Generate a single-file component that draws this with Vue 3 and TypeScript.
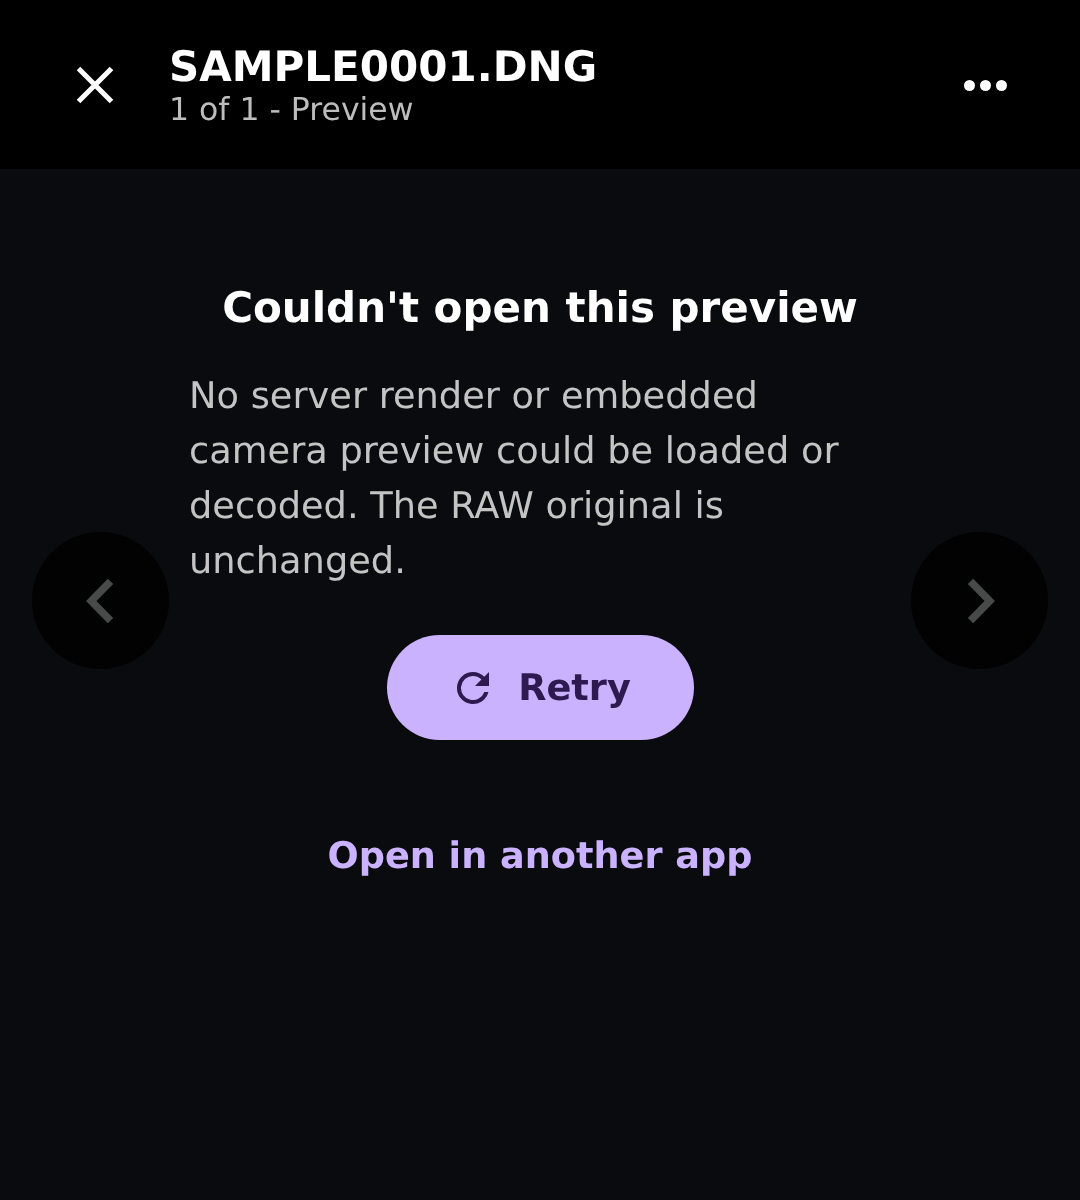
<template>
  <div class="screen">
    <header class="top-bar">
      <button class="close-btn" aria-label="Close">
        <svg width="40" height="40" viewBox="0 0 40 40">
          <path d="M3.5 3.5 L36.5 36.5 M36.5 3.5 L3.5 36.5" stroke="#fff" stroke-width="5" fill="none" />
        </svg>
      </button>
      <div class="titles">
        <div class="file-name">SAMPLE0001.DNG</div>
        <div class="file-sub">1 of 1 - Preview</div>
      </div>
      <button class="more-btn" aria-label="More">
        <span v-for="n in 3" :key="n" class="dot"></span>
      </button>
    </header>

    <main class="body">
      <button class="nav-btn prev" aria-label="Previous">
        <svg width="30" height="46" viewBox="0 0 30 46">
          <path d="M24.5 3.3 L5.3 23 L24.5 42.7" stroke="#484a4a" stroke-width="7.5" fill="none" />
        </svg>
      </button>
      <button class="nav-btn next" aria-label="Next">
        <svg width="30" height="46" viewBox="0 0 30 46">
          <path d="M5.5 3.3 L24.7 23 L5.5 42.7" stroke="#484a4a" stroke-width="7.5" fill="none" />
        </svg>
      </button>

      <section class="error">
        <h1 class="error-title">Couldn't open this preview</h1>
        <p class="error-text">No server render or embedded camera preview could be loaded or decoded. The RAW original is unchanged.</p>
        <button class="retry">
          <svg width="48" height="48" viewBox="0 0 24 24">
            <path d="M17.65 6.35A7.96 7.96 0 0 0 12 4a8 8 0 1 0 7.73 10h-2.08A6 6 0 1 1 12 6c1.66 0 3.14.69 4.22 1.78L13 11h7V4l-2.35 2.35z" fill="#2f1a4f" />
          </svg>
          <span>Retry</span>
        </button>
        <a class="other-app">Open in another app</a>
      </section>
    </main>
  </div>
</template>

<script setup lang="ts">
</script>

<style>
html, body {
  margin: 0;
  background: #0a0b0f;
}
</style>

<style scoped>
.screen {
  width: 1080px;
  height: 1200px;
  display: flex;
  flex-direction: column;
  background: #0a0b0f;
  font-family: "DejaVu Sans", sans-serif;
  text-rendering: geometricPrecision;
  overflow: hidden;
}
button {
  border: none;
  background: none;
  padding: 0;
  font-family: inherit;
  text-rendering: inherit;
}
.top-bar {
  height: 169px;
  flex: none;
  display: flex;
  align-items: center;
  background: #000;
  padding: 0 73px 0 75px;
  box-sizing: border-box;
}
.close-btn {
  width: 40px;
  height: 40px;
  margin-right: 54px;
  display: flex;
}
.titles {
  flex: 1;
  margin-top: 1px;
  will-change: transform;
}
.file-name {
  color: #fff;
  font-size: 42px;
  font-weight: 700;
  line-height: 50px;
}
.file-sub {
  color: #bdbdbd;
  font-size: 31.5px;
  line-height: 36px;
}
.more-btn {
  display: flex;
  gap: 5px;
  align-items: center;
  padding-top: 1px;
}
.dot {
  width: 11px;
  height: 11px;
  border-radius: 50%;
  background: #fff;
}
.body {
  flex: 1;
  position: relative;
}
.nav-btn {
  position: absolute;
  top: 363px;
  width: 137px;
  height: 137px;
  border-radius: 50%;
  background: #020203;
  display: flex;
  align-items: center;
  justify-content: center;
}
.prev { left: 32px; }
.next { right: 32px; }
.error {
  display: flex;
  flex-direction: column;
  align-items: center;
  padding-top: 113px;
  will-change: transform;
}
.error-title {
  margin: 0;
  color: #fff;
  font-size: 42px;
  font-weight: 700;
  line-height: 52px;
}
.error-text {
  margin: 34px 0 0;
  width: 702px;
  box-sizing: border-box;
  color: #c4c4c4;
  font-size: 36.75px;
  line-height: 55px;
}
.retry {
  margin-top: 47px;
  width: 307px;
  height: 105px;
  border-radius: 53px;
  background: #cbb2fe;
  color: #2f1a4f;
  font-size: 36.7px;
  font-weight: 700;
  display: flex;
  align-items: center;
  justify-content: center;
  gap: 21px;
}
.other-app {
  margin-top: 94px;
  color: #cbb2fe;
  font-size: 36.65px;
  font-weight: 700;
  line-height: 44px;
}
</style>
